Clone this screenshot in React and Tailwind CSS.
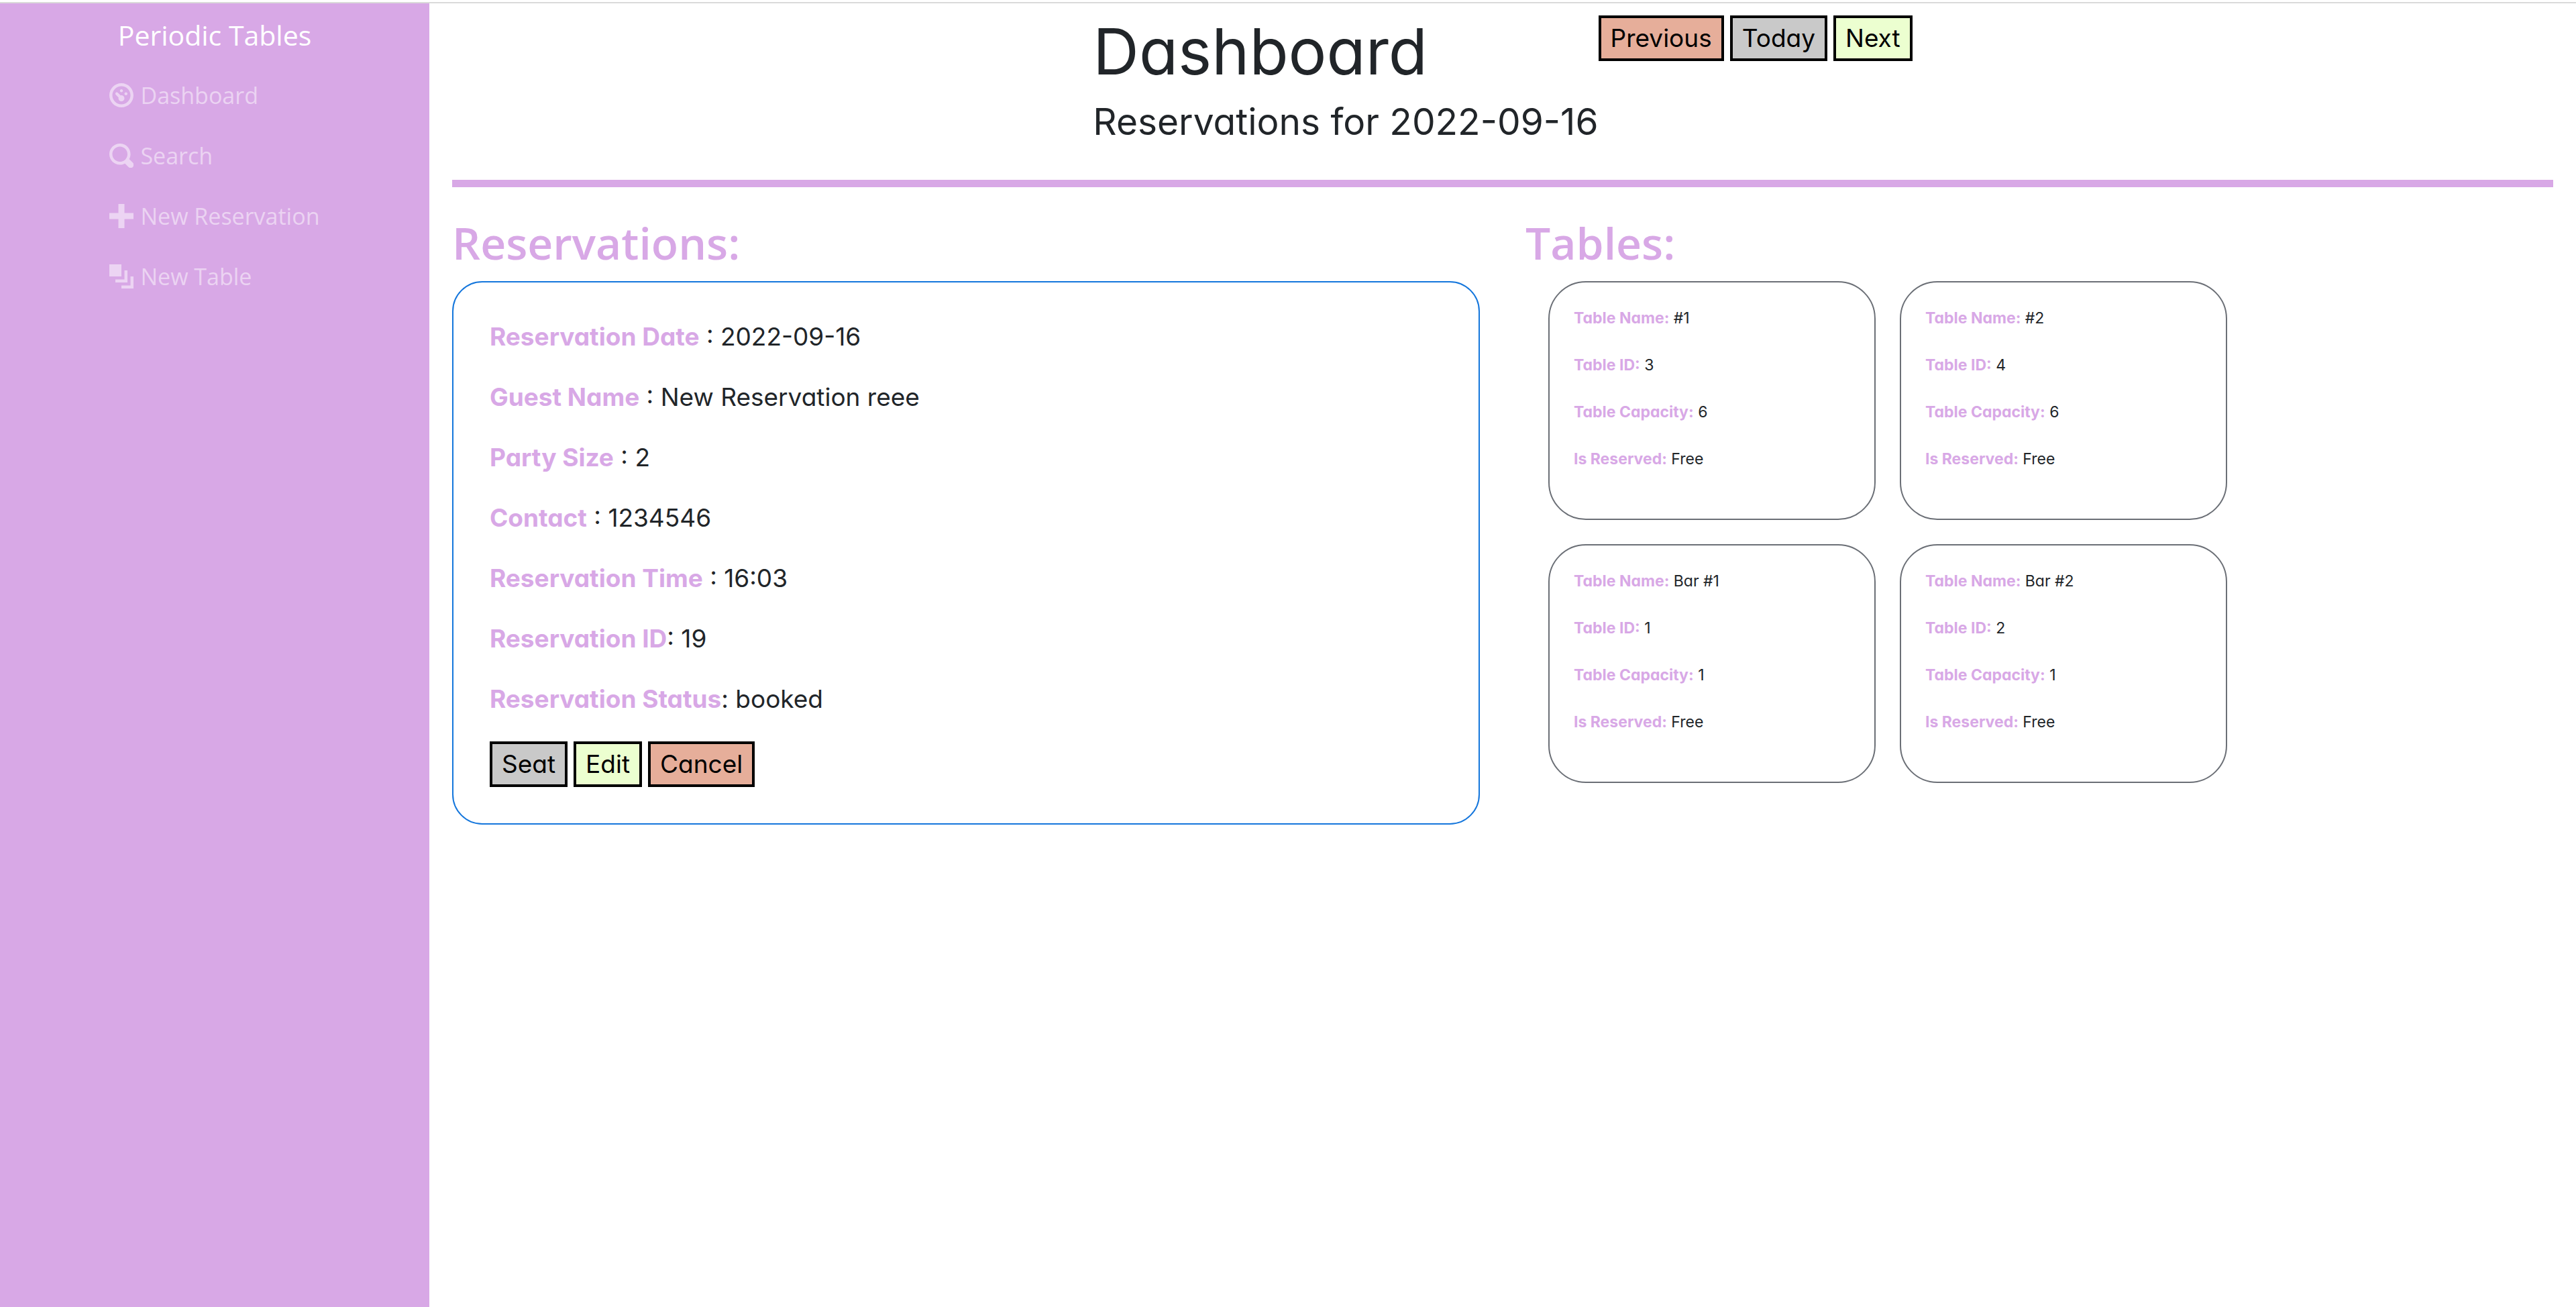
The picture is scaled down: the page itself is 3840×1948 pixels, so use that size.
const ICONS = {
  dashboard:
    "M4 0c-2.2 0-4 1.8-4 4s1.8 4 4 4 4-1.8 4-4-1.8-4-4-4zm0 1c1.66 0 3 1.34 3 3s-1.34 3-3 3-3-1.34-3-3 1.34-3 3-3zm0 1c-.28 0-.5.22-.5.5s.22.5.5.5.5-.22.5-.5-.22-.5-.5-.5zm-1.66 1a.5.5 0 0 0-.19.84l.91.91c-.02.08-.06.16-.06.25 0 .55.45 1 1 1s1-.45 1-1-.45-1-1-1c-.09 0-.17.04-.25.06l-.91-.91a.5.5 0 0 0-.44-.16.5.5 0 0 0-.06 0zm3.16 0c-.28 0-.5.22-.5.5s.22.5.5.5.5-.22.5-.5-.22-.5-.5-.5z",
  search:
    "M3.5 0c-1.93 0-3.5 1.57-3.5 3.5s1.57 3.5 3.5 3.5c.59 0 1.17-.14 1.66-.41a1 1 0 0 0 .13.13l1 1a1.02 1.02 0 1 0 1.44-1.44l-1-1a1 1 0 0 0-.16-.13c.27-.49.44-1.06.44-1.66 0-1.93-1.55-3.5-3.5-3.5zm0 1c1.39 0 2.5 1.11 2.5 2.5 0 .66-.24 1.27-.66 1.72l-.03.03a1 1 0 0 0-.13.13c-.44.4-1.04.63-1.69.63-1.39 0-2.5-1.11-2.5-2.5s1.11-2.5 2.5-2.5z",
  plus: "M3 0v3h-3v2h3v3h2v-3h3v-2h-3v-3h-2z",
  layers: "M0 0v4h4v-4h-4zm5 2v3h-3v1h4v-4h-1zm2 2v3h-3v1h4v-4h-1z",
};

const NAV = [
  { icon: "dashboard", label: "Dashboard" },
  { icon: "search", label: "Search" },
  { icon: "plus", label: "New Reservation" },
  { icon: "layers", label: "New Table" },
];

const RESERVATION = [
  ["Reservation Date", " : 2022-09-16"],
  ["Guest Name", " : New Reservation reee"],
  ["Party Size", " : 2"],
  ["Contact", " : 1234546"],
  ["Reservation Time", " : 16:03"],
  ["Reservation ID", ": 19"],
  ["Reservation Status", ": booked"],
];

const TABLES = [
  { name: "#1", id: 3, capacity: 6 },
  { name: "#2", id: 4, capacity: 6 },
  { name: "Bar #1", id: 1, capacity: 1 },
  { name: "Bar #2", id: 2, capacity: 1 },
];

const TONES = {
  salmon: "bg-[#e6ae9a]",
  gray: "bg-[#c9c9c9]",
  lime: "bg-[#ecffd0]",
};

function Button({ tone, children }) {
  return (
    <button
      type="button"
      className={`border-4 border-black px-[14px] py-[3px] text-[37px] leading-[54px] text-black ${TONES[tone]}`}
    >
      {children}
    </button>
  );
}

function SectionTitle({ children }) {
  return (
    <h2 className="mb-3 font-['Open_Sans','Noto_Sans',sans-serif] text-[66px] leading-[92px] font-semibold text-[#d8a8e6]">
      {children}
    </h2>
  );
}

function Sidebar() {
  return (
    <aside className="flex w-1/6 shrink-0 flex-col items-center bg-[#d8a8e6] pt-[13px] font-['Open_Sans','Noto_Sans',sans-serif]">
      <a href="#home" className="text-[41px] leading-[68px] text-white">
        Periodic Tables
      </a>
      <nav className="mt-[11px]">
        <ul>
          {NAV.map(({ icon, label }) => (
            <li key={label}>
              <a
                href={`#${icon}`}
                className="flex items-center gap-[10px] py-[18px] text-[34px] leading-[54px] text-white/50"
              >
                <svg viewBox="0 0 8 8" className="size-9 fill-current" aria-hidden="true">
                  <path d={ICONS[icon]} />
                </svg>
                {label}
              </a>
            </li>
          ))}
        </ul>
      </nav>
    </aside>
  );
}

function TableCard({ table }) {
  const rows = [
    ["Table Name:", table.name],
    ["Table ID:", table.id],
    ["Table Capacity:", table.capacity],
    ["Is Reserved:", "Free"],
  ];
  return (
    <article className="w-[488px] rounded-[56px] border-2 border-[#6b6f76] p-9 text-[23px] leading-[34px]">
      {rows.map(([label, value]) => (
        <p key={label} className="mb-9">
          <strong className="font-bold text-[#d8a8e6]">{label}</strong> {value}
        </p>
      ))}
    </article>
  );
}

export default function App() {
  return (
    <div className="flex min-h-screen flex-col bg-white pt-[3px] font-['Inter',sans-serif] text-[#212529] [font-feature-settings:'cv11']">
      <div className="flex flex-1 border-t-2 border-[#dadada]">
        <Sidebar />
        <main className="flex-1 px-[34px] pt-[18px]">
          <header className="flex items-start justify-center">
            <div>
              <h1 className="mb-[18px] text-[95px] leading-[108px]">Dashboard</h1>
              <h2 className="mb-[18px] text-[55px] leading-[65px]">Reservations for 2022-09-16</h2>
            </div>
            <div className="flex gap-[9px]">
              <Button tone="salmon">Previous</Button>
              <Button tone="gray">Today</Button>
              <Button tone="lime">Next</Button>
            </div>
          </header>
          <hr className="my-9 border-t-[11px] border-[#d8a8e6]" />
          <div className="grid grid-cols-2 gap-[68px]">
            <section>
              <SectionTitle>Reservations:</SectionTitle>
              <article className="rounded-[45px] border-2 border-[#1476dc] p-[54px] text-[37px] leading-[54px]">
                {RESERVATION.map(([label, value]) => (
                  <p key={label} className="mb-9">
                    <strong className="font-bold text-[#d8a8e6]">{label}</strong>
                    {value}
                  </p>
                ))}
                <div className="flex gap-[9px]">
                  <Button tone="gray">Seat</Button>
                  <Button tone="lime">Edit</Button>
                  <Button tone="salmon">Cancel</Button>
                </div>
              </article>
            </section>
            <section>
              <SectionTitle>Tables:</SectionTitle>
              <div className="grid w-fit grid-cols-2 gap-9 pl-[34px]">
                {TABLES.map((table) => (
                  <TableCard key={table.name} table={table} />
                ))}
              </div>
            </section>
          </div>
        </main>
      </div>
    </div>
  );
}
